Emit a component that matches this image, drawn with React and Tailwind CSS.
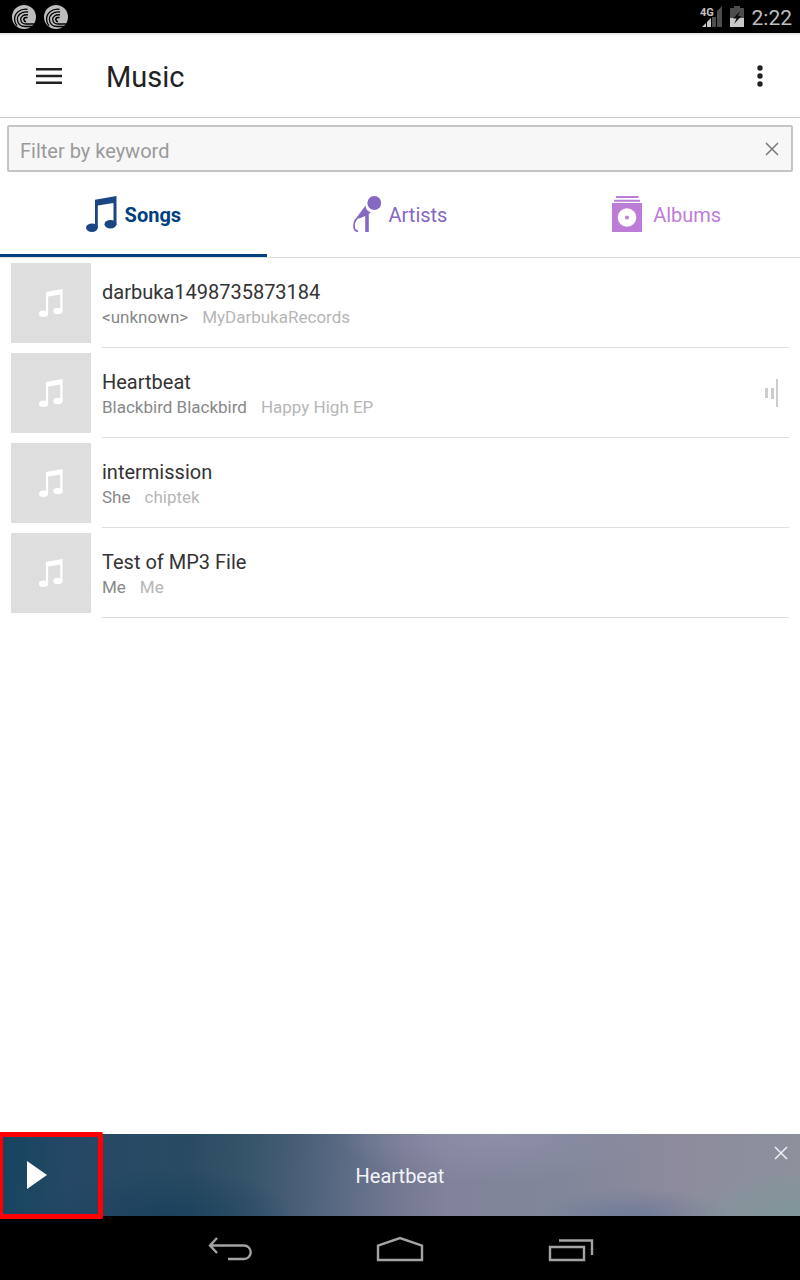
import React, { useState } from "react";

const songs = [
  { title: "darbuka1498735873184", artist: "<unknown>", album: "MyDarbukaRecords" },
  { title: "Heartbeat", artist: "Blackbird Blackbird", album: "Happy High EP", playing: true },
  { title: "intermission", artist: "She", album: "chiptek" },
  { title: "Test of MP3 File", artist: "Me", album: "Me" },
];

function TorrentIcon() {
  return (
    <svg viewBox="0 0 24 24" className="size-6" aria-hidden="true">
      <circle cx="12" cy="12" r="12" fill="#bdbdbd" />
      <g fill="none" stroke="#000" strokeWidth="1.3">
        <path d="M15.500 4.300C8 3.300 2.300 8.500 2.600 14.500c.1 2.500 1 4.500 2.400 6.200" />
        <path d="M16 7C9.500 6.300 5.200 10 5.400 14.500 5.700 19 9 21.500 13 21.500h7" />
        <path d="M16 9.800c-4.800-.5-7.500 1.900-7.300 4.700C9 17.500 11 19 14 19h8" />
        <path d="M15.500 12.600c-2.300-.5-3.800.3-3.700 1.900.1 1.200.9 2 2.200 2.200" strokeWidth="1.600" />
      </g>
    </svg>
  );
}

function SignalIcon() {
  return (
    <svg viewBox="0 0 24 24" className="h-6 w-6" aria-hidden="true">
      <text x="0" y="11" fontFamily="Roboto, sans-serif" fontSize="11" fontWeight="700" fill="#c4c4c4">4G</text>
      <path d="M2 22l4-4v4z" fill="#c9c9c9" />
      <path d="M7 17l4-4v9H7z" fill="#c9c9c9" />
      <path d="M12 12h4v10h-4z" fill="#4d4d4d" />
      <path d="M17 6l5-5v21h-5z" fill="#4d4d4d" />
    </svg>
  );
}

function BatteryIcon() {
  return (
    <svg viewBox="0 0 14 21" className="h-[21px] w-3.5" aria-hidden="true">
      <path d="M4 0h6v2h4v10H0V2h4z" fill="#4d4d4d" />
      <path d="M0 12h14v9H0z" fill="#c9c9c9" />
      <path d="M10 5L3 12.500h3.500L4 18l7.500-8H8z" fill="#111" />
    </svg>
  );
}

function NoteIcon({ className }) {
  return (
    <svg viewBox="0 0 31 36" className={className} fill="currentColor" aria-hidden="true">
      <path d="M9 3.700L30.500 0v28.500h-3V7L11.800 9.500V32H9z" />
      <ellipse cx="5.900" cy="31.800" rx="5.900" ry="4.200" />
      <ellipse cx="24.500" cy="28.300" rx="6" ry="4.200" />
    </svg>
  );
}

function MicIcon() {
  return (
    <svg viewBox="0 0 29 36" className="h-9 w-[29px]" aria-hidden="true">
      <circle cx="21.300" cy="7" r="6.900" fill="#8468c4" />
      <path d="M12.500 9.500c.3 3.800 2 5.800 5.200 6.700L15.800 18v18h-3.600V20l-5.500 2.300-3.200-.6z" fill="#8468c4" />
      <path d="M7.500 20.500C3 22 1 26 1 30c0 3 1.400 5 4 5.400" fill="none" stroke="#8468c4" strokeWidth="1.700" />
    </svg>
  );
}

function AlbumIcon() {
  return (
    <svg viewBox="0 0 30 36" className="h-9 w-[30px]" aria-hidden="true">
      <path d="M4 0h22.500v2H4zM2 3.700h26v2H2z" fill="#be7cd9" />
      <path d="M0 7h30v29H0z" fill="#be7cd9" />
      <circle cx="15" cy="21.500" r="9.300" fill="#fff" />
      <circle cx="15" cy="21.500" r="2" fill="#be7cd9" />
    </svg>
  );
}

function CloseIcon({ className }) {
  return (
    <svg viewBox="0 0 14 14" className={className} aria-hidden="true">
      <path d="M1 1l12 12M13 1L1 13" stroke="currentColor" strokeWidth="1.500" />
    </svg>
  );
}

const tabs = [
  { id: "songs", label: "Songs", icon: <NoteIcon className="h-9 w-[31px] text-[#1a4684]" />, style: "gap-2 text-[#003f82] font-bold" },
  { id: "artists", label: "Artists", icon: <MicIcon />, style: "gap-[7px] text-[#8468c4]" },
  { id: "albums", label: "Albums", icon: <AlbumIcon />, style: "gap-[11px] text-[#be7cd9]" },
];

export default function App() {
  const [active, setActive] = useState("songs");
  const [keyword, setKeyword] = useState("");
  const visible = songs.filter((s) =>
    (s.title + s.artist + s.album).toLowerCase().includes(keyword.toLowerCase())
  );

  return (
    <div className="flex min-h-screen flex-col bg-white font-['Roboto',sans-serif]">
      <div className="flex h-[33px] items-center justify-between bg-black pr-2 pl-3">
        <div className="flex gap-2">
          <TorrentIcon />
          <TorrentIcon />
        </div>
        <div className="flex items-center gap-1.5">
          <SignalIcon />
          <BatteryIcon />
          <span className="pt-0.5 pl-0.5 text-[21px] leading-8 text-[#bebebe]">2:22</span>
        </div>
      </div>

      <header className="flex h-[85px] items-center border-b border-[#cccccc] pt-0.5 pr-[30px] pl-9 shadow-[inset_0_3px_3px_-2px_#d8d0d0]">
        <button type="button" aria-label="Open menu" className="text-[#212121]">
          <svg viewBox="0 0 26 16" className="h-4 w-[26px]" fill="currentColor" aria-hidden="true">
            <path d="M0 0h26v2.500H0zM0 6.800h26v2.400H0zM0 13.500h26V16H0z" />
          </svg>
        </button>
        <h1 className="flex-1 pt-0.5 pl-11 text-[29px] leading-9 text-[#222222]">Music</h1>
        <button type="button" aria-label="More options" className="px-[7px] text-[#212121]">
          <svg viewBox="0 0 6 22" className="h-[22px] w-1.5" fill="currentColor" aria-hidden="true">
            <circle cx="3" cy="3" r="2.700" />
            <circle cx="3" cy="11" r="2.700" />
            <circle cx="3" cy="19" r="2.700" />
          </svg>
        </button>
      </header>

      <div className="mx-[7px] mt-[7px] flex h-[47px] items-center rounded-xs border-2 border-[#c6c4c5] bg-[#f7f7f7] pr-3 pl-[11px]">
        <input
          type="text"
          aria-label="Filter by keyword"
          placeholder="Filter by keyword"
          value={keyword}
          onChange={(e) => setKeyword(e.target.value)}
          className="min-w-0 flex-1 bg-transparent pt-1 text-xl text-[#333333] outline-none placeholder:text-[#9a9a9a]"
        />
        <button type="button" aria-label="Clear filter" onClick={() => setKeyword("")} className="text-[#777777]">
          <CloseIcon className="size-3.5" />
        </button>
      </div>

      <div role="tablist" className="grid h-[86px] grid-cols-3 border-b border-[#dddddd]">
        {tabs.map((t) => (
          <button
            key={t.id}
            type="button"
            role="tab"
            aria-selected={active === t.id}
            onClick={() => setActive(t.id)}
            className={`flex items-center justify-center border-b-3 pt-0.5 text-xl ${
              active === t.id ? "border-[#003f82]" : "border-transparent"
            } ${t.style}`}
          >
            {t.icon}
            <span className="pt-0.5">{t.label}</span>
          </button>
        ))}
      </div>

      <ul className="flex-1">
        {visible.map((s) => (
          <li key={s.title} className="flex h-[90px] gap-[11px] px-[11px]">
            <div className="mt-[5px] flex size-20 shrink-0 items-center justify-center bg-[#dedede] text-white">
              <NoteIcon className="h-7 w-6" />
            </div>
            <div className="flex flex-1 items-center justify-between border-b border-[#dddddd]">
              <div>
                <p className="text-xl leading-7 text-[#333333]">{s.title}</p>
                <p className="flex gap-3.5 text-[17px] leading-[22px]">
                  <span className="text-[#888888]">{s.artist}</span>
                  <span className="text-[#b6b6b6]">{s.album}</span>
                </p>
              </div>
              {s.playing && (
                <svg viewBox="0 0 13 28" className="mr-[11px] h-7 w-[13px]" fill="#cccccc" role="img" aria-label="Now playing">
                  <path d="M0 9h3v10H0zM6 9h3v11H6zM11 0h2v28h-2z" />
                </svg>
              )}
            </div>
          </li>
        ))}
      </ul>

      <section
        aria-label="Player"
        className="relative z-10 grid h-[82px] grid-cols-[102px_1fr_102px] bg-[radial-gradient(ellipse_20%_60%_at_62%_0%,#8d8fa8_0%,transparent_100%),radial-gradient(ellipse_16%_60%_at_100%_100%,#7f9799_0%,transparent_100%),radial-gradient(ellipse_12%_35%_at_79%_100%,#707c98_0%,transparent_100%),radial-gradient(ellipse_16%_60%_at_21%_100%,#183f5ccc_0%,transparent_100%),linear-gradient(94deg,#164560_0%,#264866_10%,#2a4c62_24%,#36546a_31%,#455c74_36%,#5b6b84_43%,#747991_50%,#80839a_56%,#80879a_70%,#8d8b9d_84%,#8c919b_100%)]"
      >
        <button type="button" aria-label="Play" className="flex items-center pl-[27px] text-white">
          <svg viewBox="0 0 20 28" className="h-7 w-5" fill="currentColor" aria-hidden="true">
            <path d="M0 0l20 14L0 28z" />
          </svg>
        </button>
        <p className="flex items-center justify-center pt-0.5 text-xl text-[#f4f4f8]">Heartbeat</p>
        <button type="button" aria-label="Close player" className="flex items-start justify-end pt-3 pr-3 text-[#f0f0f4]">
          <CloseIcon className="size-3.5" />
        </button>
        <div className="pointer-events-none absolute -top-0.5 left-0 h-[87px] w-[103px] rounded-r-xs border-5 border-l-3 border-[#ff0000]" />
      </section>

      <nav aria-label="System" className="grid h-16 grid-cols-[1fr_48px_1fr] items-center bg-black pt-0.5 text-[#a3a3a3]">
        <button type="button" aria-label="Back" className="mr-[124px] justify-self-end">
          <svg viewBox="0 0 44 26" className="h-[26px] w-11" fill="none" stroke="currentColor" strokeWidth="2.400" aria-hidden="true">
            <path d="M9 2L2 9.500L9 17M2 9.500h34a6.600 6.600 0 0 1 0 13.500H20" />
          </svg>
        </button>
        <button type="button" aria-label="Home">
          <svg viewBox="0 0 48 26" className="h-[26px] w-12" fill="none" stroke="currentColor" strokeWidth="2.400" aria-hidden="true">
            <path d="M2 24V9.500L24 2l22 7.500V24z" />
          </svg>
        </button>
        <button type="button" aria-label="Recent apps" className="ml-[124px] justify-self-start">
          <svg viewBox="0 0 46 26" className="h-[26px] w-[46px]" fill="none" stroke="currentColor" strokeWidth="2.400" aria-hidden="true">
            <path d="M2 11h34v13H2zM11 4.500h33V19" />
          </svg>
        </button>
      </nav>
    </div>
  );
}
